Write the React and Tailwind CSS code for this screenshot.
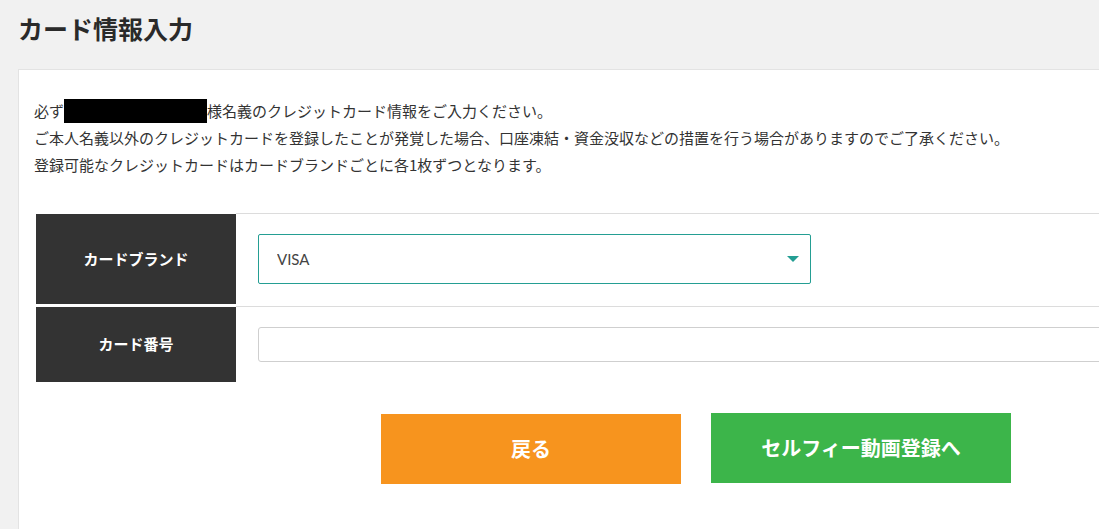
import { useState } from 'react'

const jp = { fontFamily: '"Noto Sans CJK JP", "Noto Sans", sans-serif' }

export default function App() {
  const [brand, setBrand] = useState('VISA')
  const [num, setNum] = useState('')

  return (
    <div className="min-h-screen w-full overflow-hidden bg-[#f1f1f1] text-[#333]" style={jp}>
      <h1 className="pl-[18px] pt-[12px] text-[25px] leading-[32px] font-bold text-[#2a2a2a]">カード情報入力</h1>

      <div className="ml-[18px] mt-[25px] w-[1200px] min-h-[460px] bg-white border-t border-l border-[#e3e3e3] pl-[15px] pt-[27px] pb-10">
        <div className="text-[15px] leading-[27px]">
          <p className="flex items-center">
            必ず<span className="inline-block w-[143px] h-[24px] bg-black" />様名義のクレジットカード情報をご入力ください。
          </p>
          <p>ご本人名義以外のクレジットカードを登録したことが発覚した場合、口座凍結・資金没収などの措置を行う場合がありますのでご了承ください。</p>
          <p>登録可能なクレジットカードはカードブランドごとに各1枚ずつとなります。</p>
        </div>

        <div className="mt-[35px] ml-[2px]">
          <div className="flex">
            <div className="mt-px w-[200px] h-[90px] shrink-0 bg-[#333] text-white text-[15px] font-bold flex items-center justify-center">
              カードブランド
            </div>
            <div className="flex-1 border-t border-[#dcdcdc] pt-[20px] pl-[22px]">
              <div className="relative w-[553px] h-[50px]">
                <select value={brand} onChange={e => setBrand(e.target.value)}
                  className="appearance-none w-full h-full border border-[#249e93] rounded-[2px] bg-white pl-[18px] text-[15px] text-[#444] outline-none"
                  style={{ fontFamily: 'Lato, "Open Sans", sans-serif' }}>
                  <option>VISA</option>
                  <option>MasterCard</option>
                  <option>JCB</option>
                </select>
                <span className="pointer-events-none absolute right-[12px] top-[22px] w-0 h-0 border-l-[6px] border-r-[6px] border-t-[6px] border-l-transparent border-r-transparent border-t-[#249e93]" />
              </div>
            </div>
          </div>

          <div className="flex mt-[2px]">
            <div className="mt-px w-[200px] h-[75px] shrink-0 bg-[#333] text-white text-[15px] font-bold flex items-center justify-center">
              カード番号
            </div>
            <div className="flex-1 border-t border-[#dcdcdc] pt-[20px] pl-[22px]">
              <input value={num} onChange={e => setNum(e.target.value)}
                className="w-full h-[35px] border border-[#cfcfcf] rounded-[3px] px-3 text-[15px] outline-none" />
            </div>
          </div>
        </div>

        <div className="flex gap-[30px] pl-[347px] mt-[32px]">
          <button className="w-[300px] h-[70px] bg-[#f7941e] text-white text-[20px] font-bold">戻る</button>
          <button className="w-[300px] h-[70px] -mt-px bg-[#3cb54a] text-white text-[20px] font-bold">セルフィー動画登録へ</button>
        </div>
      </div>
    </div>
  )
}
